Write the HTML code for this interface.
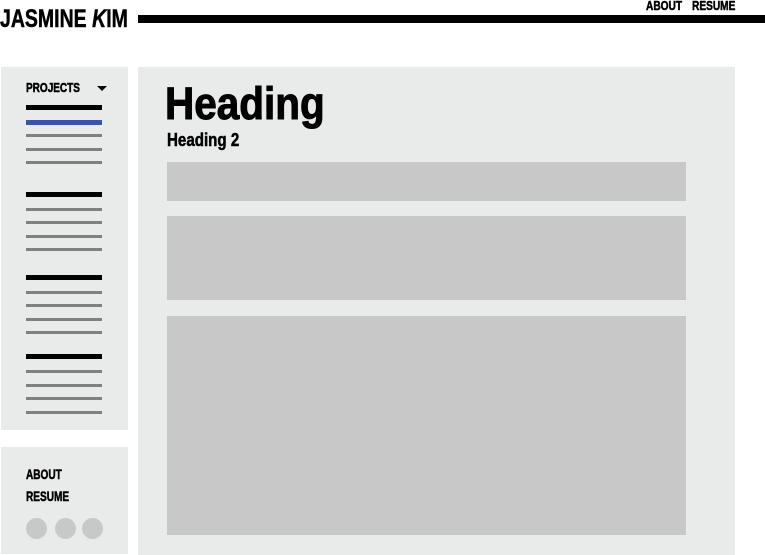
<!DOCTYPE html>
<html><head><style>
body{margin:0;width:765px;height:555px;position:relative;background:#fff;overflow:hidden;font-family:"Liberation Sans",sans-serif;font-weight:bold;color:#000}
.a{position:absolute}
.t{position:absolute;white-space:nowrap;transform-origin:0 0;line-height:1}
.s{-webkit-text-stroke:0.5px #000}
.l{position:absolute;left:26px;width:76px}
.k{height:5px;background:#000}
.g{height:3px;background:#808080}
.b{height:5px;background:#3a55a4}
.box{position:absolute;left:167px;width:519px;background:#c8c8c8}
.c{position:absolute;width:21px;height:21px;border-radius:50%;background:#c8c8c8;top:518px}
</style></head><body>
<div class="t s" style="left:0;top:7px;font-size:25px;transform:scaleX(.78)">JASMINE <i>K</i>IM</div>
<div class="a" style="left:138px;top:15px;width:627px;height:8px;background:#000"></div>
<div class="t s" style="left:646px;top:-1px;font-size:13px;transform:scaleX(.78)">ABOUT</div>
<div class="t s" style="left:692px;top:-1px;font-size:13px;transform:scaleX(.78)">RESUME</div>

<div class="a" style="left:1px;top:67px;width:127px;height:363px;background:#e9eaea"></div>
<div class="a" style="left:1px;top:447px;width:127px;height:107px;background:#e9eaea"></div>
<div class="a" style="left:138px;top:67px;width:597px;height:488px;background:#e9eaea"></div>

<div class="t s" style="left:26px;top:81px;font-size:13px;transform:scaleX(.77)">PROJECTS</div>
<div class="a" style="left:97px;top:86px;width:0;height:0;border-left:5px solid transparent;border-right:5px solid transparent;border-top:5px solid #000"></div>

<div class="l k" style="top:105px"></div>
<div class="l b" style="top:120px"></div>
<div class="l g" style="top:134px"></div>
<div class="l g" style="top:148px"></div>
<div class="l g" style="top:161px"></div>

<div class="l k" style="top:192px"></div>
<div class="l g" style="top:208px"></div>
<div class="l g" style="top:221px"></div>
<div class="l g" style="top:235px"></div>
<div class="l g" style="top:248px"></div>

<div class="l k" style="top:275px"></div>
<div class="l g" style="top:291px"></div>
<div class="l g" style="top:304px"></div>
<div class="l g" style="top:318px"></div>
<div class="l g" style="top:331px"></div>

<div class="l k" style="top:354px"></div>
<div class="l g" style="top:370px"></div>
<div class="l g" style="top:384px"></div>
<div class="l g" style="top:397px"></div>
<div class="l g" style="top:411px"></div>

<div class="t s" style="left:26px;top:467px;font-size:14px;transform:scaleX(.72)">ABOUT</div>
<div class="t s" style="left:26px;top:489px;font-size:14px;transform:scaleX(.72)">RESUME</div>
<div class="c" style="left:26px"></div>
<div class="c" style="left:55px"></div>
<div class="c" style="left:82px"></div>

<div class="t" style="left:165px;top:81px;font-size:45px;transform:scaleX(.9);-webkit-text-stroke:1px #000">Heading</div>
<div class="t s" style="left:167px;top:131px;font-size:18px;transform:scaleX(.84)">Heading 2</div>

<div class="box" style="top:162px;height:39px"></div>
<div class="box" style="top:216px;height:84px"></div>
<div class="box" style="top:316px;height:219px"></div>
</body></html>
